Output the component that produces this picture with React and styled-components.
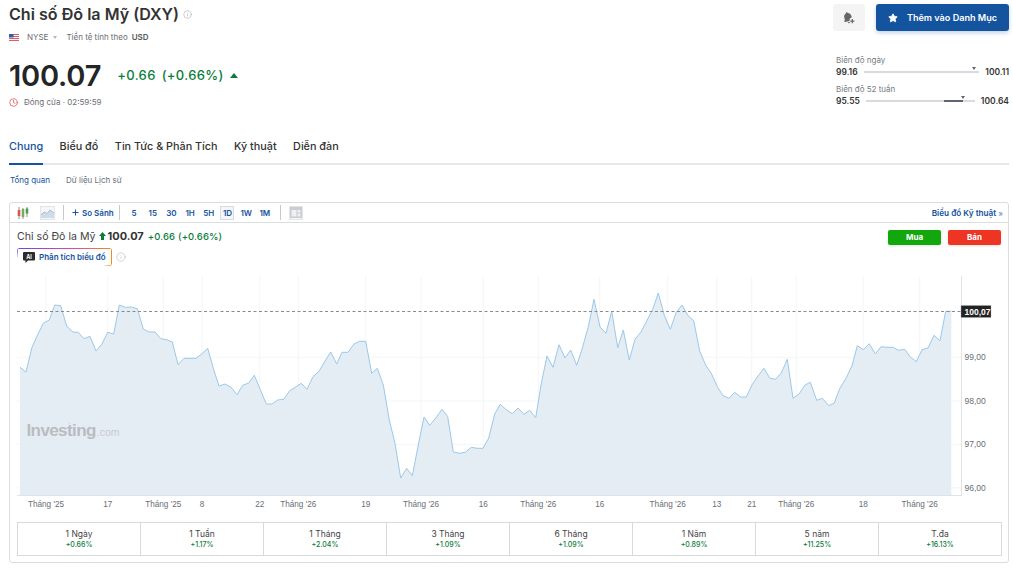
import styled, { createGlobalStyle } from 'styled-components'
import { Star, Clock, Info, Plus } from 'lucide-react'

const GlobalStyle = createGlobalStyle`
*{box-sizing:border-box;}
html,body{margin:0;padding:0;background:#fff;}
body{font-family:Inter,"Noto Sans",sans-serif;color:#232526;overflow:hidden;}
`

const points = [
  [20,367.3],[26,372],[32,347.3],[37.5,335],[43.3,323.3],[49.3,320],[54.7,305],[60.7,305.7],[66.7,326],[72.7,332],[78.3,332.3],[84,338.7],[90,336.3],[96,351],[102,344],[107.7,332.3],[113.7,334],[119.3,305],[125.3,307.3],[131.3,307],[137.3,308.7],[143.3,329],[149,332],[155,332],[161,338.7],[166.7,339.7],[172.3,342],[178,364.7],[184,358.3],[190,358.3],[196,358.3],[201.7,354],[207.7,348.3],[213.3,368.3],[219,386],[225,384],[231,387.3],[237,394.7],[242.7,385.3],[248.7,383],[254.3,375.3],[260.3,389.7],[266.3,404],[272,404],[277.7,400],[283.7,399.3],[289.7,390.7],[295.3,387.3],[301.3,383.3],[307,389.3],[313,376.7],[319,371.3],[325,361],[330.7,352],[336.7,364],
  [342,352.3],[348,352.3],[354,344],[359.3,341.3],[365.7,341.3],[371.7,373.3],[377.3,368.3],[383.3,385],[389.3,420],[395,443.3],[400.7,478],[406.7,468.3],[412.3,475.7],[418.3,445],[424,417],[429.7,425.3],[436,417.7],[442,409.3],[447.7,416.7],[453.3,452],[459.3,453.3],[465.3,452.3],[471.3,447.3],[477,448.3],[483,448.3],[488.7,438],[494.7,414],[500.3,404.3],[506.3,409.7],[512.3,413.7],[518,408],[524,414.3],[529.7,410.3],[535.7,417.7],[541.3,383.3],[547,356],[553,367.3],[559,344.7],[565,358],[570.7,350],[576.7,365.3],[582.3,348.3],[588.3,326.7],[594,299.3],[600,327],[606,333.3],[611.7,311],[617.7,347.7],[623.3,330],[629.3,360],[635,339.3],[641,332],[646.7,321],[652.7,309.3],[658.3,293],[664.3,315.3],[670.3,329.3],[676.3,312.3],
  [682,305],[688,315.7],[693.7,320.7],[699.7,351],[705.7,365.3],[711.3,373.3],[717.3,386.7],[723,395.7],[729,398.3],[734.7,392.3],[740.7,397],[746.3,397],[752.3,384.3],[758,376],[764,368.3],[769.7,378],[775.3,379.3],[781.3,373],[787.3,359.3],[793,398.3],[799,394],[805,385],[810.3,382.3],[816.7,400.3],[822.3,398.3],[828.7,405.7],[834.3,403],[839.7,388.7],[846,378.3],[852,365.7],[857.3,345.7],[863.3,349.7],[869.3,343.7],[875.3,354],[881,346.7],[887,347.3],[893,347.3],[898.7,350.3],[904.7,349.3],[910.3,357],[916.3,361.7],[922,349.7],[928,348],[934,335.3],[940,340.7],[945.7,311.3],[951.3,311.3],
]

const xTicks = [
  [46,"Tháng '25"],[107.7,'17'],[163.3,"Tháng '25"],[202,'8'],[259.7,'22'],[298.3,"Tháng '26"],[365.7,'19'],[421,"Tháng '26"],[483.3,'16'],[538.3,"Tháng '26"],[599.7,'16'],[667.7,"Tháng '26"],[716.7,'13'],[751.7,'21'],[796.3,"Tháng '26"],[863.3,'18'],[919.7,"Tháng '26"],
]
const yTicks = [[357.3,'99,00'],[401,'98,00'],[444.3,'97,00'],[487.8,'96,00']]
const intervals = ['5','15','30','1H','5H','1D','1W','1M']
const periods = [
  ['1 Ngày','+0.66%'],['1 Tuần','+1.17%'],['1 Tháng','+2.04%'],['3 Tháng','+1.09%'],
  ['6 Tháng','+1.09%'],['1 Năm','+0.89%'],['5 năm','+11.25%'],['T.đa','+16.13%'],
]
const tabs = ['Chung','Biểu đồ','Tin Tức & Phân Tích','Kỹ thuật','Diễn đàn']

export default function App() {
  const line = points.map(p => p.join(',')).join(' ')
  const area = `20,495.5 ${line} 951.3,495.5`
  return (
    <Page>
      <GlobalStyle />
      <Header>
        <Left>
          <Title>Chỉ số Đô la Mỹ (DXY) <Info size={9} color="#a9adb3" strokeWidth={1.6} /></Title>
          <Meta>
            <svg width="10" height="7" viewBox="0 0 10 7">
              <rect width="10" height="7" fill="#f3f4f6" />
              <path d="M0 .5h10M0 2.5h10M0 4.5h10M0 6.5h10" stroke="#d9606a" strokeWidth="1" />
              <rect width="4.5" height="3.5" fill="#3f5a98" />
            </svg>
            <MetaText $ml={8}>NYSE</MetaText>
            <Caret />
            <MetaText $ml={9}>Tiền tệ tính theo</MetaText>
            <MetaStrong>USD</MetaStrong>
          </Meta>
          <PriceRow>
            <Price>100.07</Price>
            <Change>+0.66</Change>
            <Change>(+0.66%)</Change>
            <UpArrow />
          </PriceRow>
          <Closed>
            <Clock size={9} color="#e2504e" strokeWidth={2} />
            <span>Đóng cửa · 02:59:59</span>
          </Closed>
        </Left>
        <Right>
          <Actions>
            <BellButton>
              <svg width="14" height="14" viewBox="0 0 14 14" fill="#63666b">
                <g transform="rotate(-14 6 7)">
                  <path d="M6 1c.6 0 1 .4 1.100 1 1.700.5 2.700 2 2.700 3.700v1.500c-1.800.2-2.900 1.500-3 3H2c-.5 0-.7-.5-.4-.9l.9-1.200V5.700C2.500 4 3.400 2.500 5 2 5.100 1.400 5.400 1 6 1z" />
                  <path d="M4.500 11.200h2.600c-.2.700-.7 1.100-1.300 1.100s-1.100-.4-1.300-1.100z" />
                </g>
                <path d="M10.300 8v4.200M8.200 10.100h4.200" stroke="#63666b" strokeWidth="1.200" />
              </svg>
            </BellButton>
            <WatchButton>
              <Star size={10} fill="#fff" color="#fff" />
              Thêm vào Danh Mục
            </WatchButton>
          </Actions>
          <Ranges>
            <RangeLabel>Biên độ ngày</RangeLabel>
            <RangeRow>
              <b>99.16</b>
              <Track><Marker style={{ left: '95.500%' }} /></Track>
              <b>100.11</b>
            </RangeRow>
            <RangeLabel $mt={6}>Biên độ 52 tuần</RangeLabel>
            <RangeRow>
              <b>95.55</b>
              <Track>
                <TrackFill style={{ left: '71.500%', width: '17.800%' }} />
                <Marker style={{ left: '89.300%' }} />
              </Track>
              <b>100.64</b>
            </RangeRow>
          </Ranges>
        </Right>
      </Header>

      <Tabs>
        {tabs.map((t, i) => <Tab key={t} $active={i === 0}>{t}</Tab>)}
      </Tabs>
      <SubNav>
        <SubLink $active>Tổng quan</SubLink>
        <SubLink>Dữ liệu Lịch sử</SubLink>
      </SubNav>

      <Card>
        <Toolbar>
          <ToolIcon $w={12} $ml={7}>
            <svg width="12" height="12" viewBox="0 0 12 12">
              <path d="M2 0v12M6 1v11M10 0v10" stroke="#6b7a5a" strokeWidth=".8" />
              <rect x=".7" y="3" width="2.600" height="6" fill="#d9534f" />
              <rect x="4.700" y="2" width="2.600" height="8" fill="#7ea860" />
              <rect x="8.700" y="1.500" width="2.600" height="5" fill="#4c9a4e" />
            </svg>
          </ToolIcon>
          <ToolIcon $w={15} $ml={11} $boxed>
            <svg width="13" height="11" viewBox="0 0 13 11">
              <path d="M0 8l3-3 3 1.500L9 3l4 3v5H0z" fill="#cfdbe8" />
              <path d="M0 8l3-3 3 1.500L9 3l4 3" fill="none" stroke="#9fb5cc" strokeWidth=".8" />
            </svg>
          </ToolIcon>
          <Separator $ml={8} />
          <CompareButton><Plus size={9} strokeWidth={2.600} /> So Sánh</CompareButton>
          <Separator $ml={5} />
          <Intervals>
            {intervals.map(v => <Interval key={v} $active={v === '1D'}>{v}</Interval>)}
          </Intervals>
          <Separator $ml={6} />
          <ToolIcon $w={14} $ml={8} $boxed>
            <svg width="12" height="11" viewBox="0 0 12 11" fill="#9a9ea3">
              <rect width="12" height="11" fill="#c9ccd0" />
              <rect x="1.500" y="3" width="5" height="6.500" fill="#eef0f1" />
              <rect x="7.500" y="3" width="3" height="2.500" fill="#eef0f1" />
              <rect x="7.500" y="6.500" width="3" height="3" fill="#eef0f1" />
            </svg>
          </ToolIcon>
          <TechLink>Biểu đồ Kỹ thuật <span>»</span></TechLink>
        </Toolbar>

        <Legend>
          <LegendInfo>
            <LegendName>Chỉ số Đô la Mỹ</LegendName>
            <svg width="7" height="8" viewBox="0 0 7 8"><path d="M3.500 0L7 4H5v4H2V4H0z" fill="#0a7d3a" /></svg>
            <LegendPrice>100.07</LegendPrice>
            <LegendChange>+0.66</LegendChange>
            <LegendChange>(+0.66%)</LegendChange>
          </LegendInfo>
          <TradeButton $color="#12a70c">Mua</TradeButton>
          <TradeButton $color="#ee3524">Bán</TradeButton>
        </Legend>

        <AiRow>
          <AiButton>
            <svg width="12" height="11" viewBox="0 0 12 11">
              <path d="M1 0h10a1 1 0 0 1 1 1v6.500a1 1 0 0 1-1 1H5L2.500 11V8.500H1a1 1 0 0 1-1-1V1a1 1 0 0 1 1-1z" fill="#2a2b2d" />
              <text x="6" y="6.500" textAnchor="middle" fontSize="5.500" fontWeight="700" fill="#fff" fontFamily="Inter, sans-serif">AI</text>
            </svg>
            Phân tích biểu đồ
          </AiButton>
          <Info size={10} color="#b4b7bb" strokeWidth={1.400} />
        </AiRow>

        <Chart viewBox="10 270 998 248" width="998" height="248">
          {xTicks.map(([x]) => <line key={x} x1={x} x2={x} y1="276" y2="495" stroke="#f3f5f7" strokeWidth="1" />)}
          {yTicks.map(([y]) => <line key={y} x1="17" x2="961" y1={y} y2={y} stroke="#f3f5f7" strokeWidth="1" />)}
          <polygon points={area} fill="#e4edf4" />
          <polyline points={line} fill="none" stroke="#9cc8ea" strokeWidth="1" />
          <line x1="17" x2="961" y1="495.500" y2="495.500" stroke="#dfe3e6" />
          <line x1="961.500" x2="961.500" y1="276" y2="496" stroke="#dfe3e6" />
          <line x1="17" x2="961" y1="311.500" y2="311.500" stroke="#8a8a8a" strokeWidth="1" strokeDasharray="3 2.500" />
          <Watermark x="26.500" y="436">Investing<tspan fontSize="10.500" fontWeight="400" letterSpacing="0" dx="1" fill="#c8cbce">.com</tspan></Watermark>
          <circle cx="69.500" cy="423.500" r="1" fill="#f0d9a8" />
          {xTicks.map(([x, t], i) => <XLabel key={i} x={x} y="507" textAnchor="middle">{t}</XLabel>)}
          {yTicks.map(([y, t]) => <YLabel key={t} x="964.500" y={y + 3}>{t}</YLabel>)}
          <rect x="961" y="305.500" width="30" height="12" fill="#222" stroke="#aaa" strokeWidth=".4" />
          <PriceTag x="964.500" y="314.700">100,07</PriceTag>
        </Chart>

        <Periods>
          {periods.map(([name, val]) => (
            <Period key={name}>
              <PeriodName>{name}</PeriodName>
              <PeriodValue>{val}</PeriodValue>
            </Period>
          ))}
        </Periods>
      </Card>
    </Page>
  )
}

const Page = styled.div`
width:1013px;
height:568px;
padding:0 4px 0 9px;
overflow:hidden;
`
const Header = styled.header`
display:flex;
justify-content:space-between;
height:132px;
`
const Left = styled.div`
display:flex;
flex-direction:column;
padding-top:4px;
`
const Title = styled.h1`
margin:0;
font-size:16.100px;
line-height:20px;
font-weight:600;
color:#333;
display:flex;
align-items:center;
gap:4px;
white-space:nowrap;
`
const Meta = styled.div`
display:flex;
align-items:center;
height:14px;
margin-top:6px;
font-size:8px;
color:#6a6e75;
`
const MetaText = styled.span`
margin-left:${p => p.$ml}px;
`
const MetaStrong = styled.span`
margin-left:4px;
font-weight:600;
color:#555a60;
`
const Caret = styled.i`
margin-left:5px;
width:0;
height:0;
border-left:2.500px solid transparent;
border-right:2.500px solid transparent;
border-top:3px solid #b3b7bb;
`
const PriceRow = styled.div`
display:flex;
align-items:center;
height:38px;
margin-top:12px;
gap:6px;
`
const Price = styled.div`
font-size:29px;
font-weight:600;
color:#232526;
letter-spacing:-.2px;
margin-right:10px;
`
const Change = styled.span`
font-size:13px;
font-weight:500;
color:#0a7d3a;
letter-spacing:.35px;
`
const UpArrow = styled.i`
width:0;
height:0;
border-left:4.500px solid transparent;
border-right:4.500px solid transparent;
border-bottom:5px solid #0a7d3a;
`
const Closed = styled.div`
display:flex;
align-items:center;
gap:6px;
height:12px;
margin-top:2px;
font-size:8px;
color:#6a6e75;
`
const Right = styled.div`
width:176px;
display:flex;
flex-direction:column;
align-items:flex-end;
padding-top:4px;
`
const Actions = styled.div`
display:flex;
gap:11px;
`
const BellButton = styled.div`
width:32px;
height:27px;
background:#f4f4f4;
border-radius:3px;
display:flex;
align-items:center;
justify-content:center;
`
const WatchButton = styled.div`
width:133px;
height:27px;
background:#14539e;
border-radius:3px;
color:#fff;
font-size:9.100px;
font-weight:600;
display:flex;
align-items:center;
justify-content:center;
gap:9px;
box-shadow:0 2px 4px rgba(20,83,158,.25);
`
const Ranges = styled.div`
width:173px;
margin-top:24px;
`
const RangeLabel = styled.div`
font-size:8px;
line-height:11px;
color:#777b82;
margin-top:${p => p.$mt || 0}px;
`
const RangeRow = styled.div`
display:flex;
align-items:center;
gap:6px;
height:12px;
font-size:8.500px;

& b{font-weight:600;color:#333;}
`
const Track = styled.div`
flex:1;
height:2px;
background:#d9dade;
position:relative;
`
const TrackFill = styled.div`
position:absolute;
top:0;
height:2px;
background:#5f6570;
`
const Marker = styled.i`
position:absolute;
top:-4px;
margin-left:-2px;
width:0;
height:0;
border-left:2.500px solid transparent;
border-right:2.500px solid transparent;
border-top:3px solid #5f6570;
`
const Tabs = styled.nav`
display:flex;
gap:16.500px;
height:33px;
border-bottom:2px solid #e6e9eb;
`
const Tab = styled.div`
height:33px;
line-height:30px;
font-size:10.800px;
font-weight:500;
white-space:nowrap;
color:${p => p.$active ? '#14539e' : '#333'};
border-bottom:2px solid ${p => p.$active ? '#14539e' : 'transparent'};
`
const SubNav = styled.div`
display:flex;
gap:16px;
height:37px;
padding:10px 0 0 1px;
font-size:8px;
line-height:11px;
`
const SubLink = styled.div`
color:${p => p.$active ? '#14539e' : '#6a6e75'};
`
const Card = styled.section`
width:1000px;
height:361px;
border:1px solid #dadde0;
border-radius:3px;
`
const Toolbar = styled.div`
display:flex;
align-items:center;
height:20px;
border-bottom:1px solid #dadde0;
font-size:8px;
font-weight:600;
color:#14539e;
`
const ToolIcon = styled.div`
width:${p => p.$w}px;
height:14px;
margin-left:${p => p.$ml}px;
display:flex;
align-items:center;
justify-content:center;
border:${p => p.$boxed ? '1px solid #e3e5e7' : 'none'};
background:${p => p.$boxed ? '#f5f6f7' : 'none'};
`
const Separator = styled.i`
width:1px;
height:15px;
background:#c6c9cd;
margin-left:${p => p.$ml}px;
`
const CompareButton = styled.div`
display:flex;
align-items:center;
gap:2px;
margin-left:7px;
white-space:nowrap;
`
const Intervals = styled.div`
display:flex;
margin-left:5px;
`
const Interval = styled.div`
height:14px;
line-height:${p => p.$active ? '12px' : '14px'};
text-align:center;
border:${p => p.$active ? '1px solid #d9dce0' : 'none'};
background:${p => p.$active ? '#f4f5f6' : 'none'};
width:${p => p.$active ? '14px' : '18.700px'};
margin:${p => p.$active ? '0 2.350px' : '0'};
`
const TechLink = styled.div`
margin-left:auto;
margin-right:5px;
font-size:8.200px;
white-space:nowrap;

& span{font-weight:400;color:#5a86bd;}
`
const Legend = styled.div`
display:flex;
align-items:center;
gap:7px;
height:26px;
padding:0 7px;
`
const LegendInfo = styled.div`
flex:1;
display:flex;
align-items:center;
gap:3px;
`
const LegendName = styled.span`
font-size:10.600px;
color:#444;
`
const LegendPrice = styled.span`
font-size:11px;
font-weight:700;
color:#333;
margin:0 1px 0 -1px;
`
const LegendChange = styled.span`
font-size:9.500px;
font-weight:500;
color:#0a7d3a;
letter-spacing:.1px;
`
const TradeButton = styled.div`
width:53px;
height:15px;
margin-top:2px;
border-radius:2px;
background:${p => p.$color};
color:#fff;
font-size:8px;
font-weight:700;
line-height:15px;
text-align:center;
box-shadow:0 1px 3px rgba(0,0,0,.12);
`
const AiRow = styled.div`
display:flex;
align-items:center;
gap:4px;
height:18px;
margin-top:-1px;
padding-left:7px;
`
const AiButton = styled.div`
width:95px;
height:18px;
display:flex;
align-items:center;
gap:4px;
padding-left:6px;
border-radius:3px;
font-size:8px;
font-weight:600;
color:#14539e;
white-space:nowrap;
background:
  linear-gradient(90deg,#6f42e8,#d94f9e 60%,#f58a1f) top/100% 1px no-repeat,
  linear-gradient(#f58a1f,#f58a1f) right/1px 100% no-repeat,
  linear-gradient(#6f42e8,#fff 60%) left/1px 100% no-repeat,
  linear-gradient(90deg,#fff 90%,#f58a1f) bottom/100% 1px no-repeat,
  #fff;
`
const Chart = styled.svg`
display:block;
margin-top:4px;
`
const XLabel = styled.text`
font-family:"Liberation Sans",Arial,sans-serif;
font-size:8.200px;
fill:#6a6e75;
`
const YLabel = styled(XLabel)`
font-size:8.500px;
`
const PriceTag = styled(YLabel)`
fill:#fff;
font-weight:700;
`
const Watermark = styled.text`
font-family:"Liberation Sans",Arial,sans-serif;
font-size:17px;
font-weight:700;
letter-spacing:-.6px;
fill:#b9bcc0;
`
const Periods = styled.div`
display:grid;
grid-template-columns:repeat(8,1fr);
width:985px;
height:34px;
margin:4px 0 0 7px;
border:1px solid #d8dadc;
border-right:none;
`
const Period = styled.div`
display:flex;
flex-direction:column;
align-items:center;
justify-content:center;
border-right:1px solid #d8dadc;
`
const PeriodName = styled.div`
font-size:8.500px;
line-height:11px;
color:#444;
`
const PeriodValue = styled.div`
font-size:7px;
line-height:10px;
font-weight:500;
color:#0a7d3a;
`
